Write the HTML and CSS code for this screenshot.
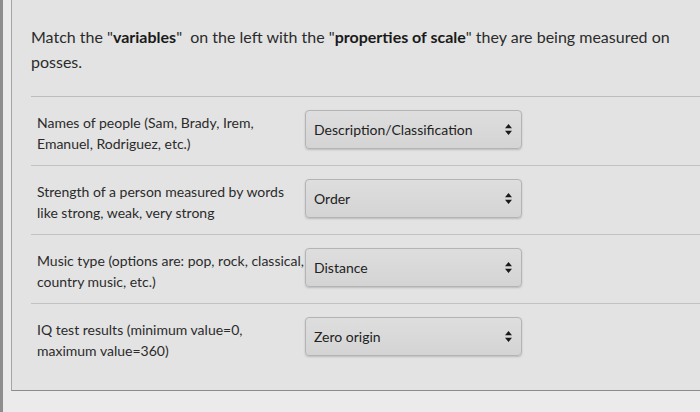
FILE: index.html
```html
<!DOCTYPE html>
<html lang="en">
<head>
    <meta charset="UTF-8">
    <meta name="viewport" content="width=device-width, initial-scale=1.0">
    <title>Matching question</title>
    <link rel="stylesheet" href="styles.css">
</head>
<body>

<div class="question">
    <p class="question-text">Match the "<b>variables</b>"&nbsp; on the left with the "<b>properties of scale</b>" they are being measured on posses.</p>

    <!-- Пары для сопоставления -->
    <div class="answers">
        <div class="row">
            <div class="label">Names of people (Sam, Brady, Irem, Emanuel, Rodriguez, etc.)</div>
            <div class="select">
                <span>Description/Classification</span>
                <svg class="arrows" width="7" height="11" viewBox="0 0 7 11"><path d="M3.5 0L7 4.2H0Z M3.5 11L0 6.8H7Z" fill="#1a1a1a"/></svg>
            </div>
        </div>
        <div class="row">
            <div class="label">Strength of a person measured by words like strong, weak, very strong</div>
            <div class="select">
                <span>Order</span>
                <svg class="arrows" width="7" height="11" viewBox="0 0 7 11"><path d="M3.5 0L7 4.2H0Z M3.5 11L0 6.8H7Z" fill="#1a1a1a"/></svg>
            </div>
        </div>
        <div class="row">
            <div class="label">Music type (options are: pop, rock, classical, country music, etc.)</div>
            <div class="select">
                <span>Distance</span>
                <svg class="arrows" width="7" height="11" viewBox="0 0 7 11"><path d="M3.5 0L7 4.2H0Z M3.5 11L0 6.8H7Z" fill="#1a1a1a"/></svg>
            </div>
        </div>
        <div class="row last">
            <div class="label">IQ test results (minimum value=0, maximum value=360)</div>
            <div class="select">
                <span>Zero origin</span>
                <svg class="arrows" width="7" height="11" viewBox="0 0 7 11"><path d="M3.5 0L7 4.2H0Z M3.5 11L0 6.8H7Z" fill="#1a1a1a"/></svg>
            </div>
        </div>
    </div>
</div>

</body>
</html>
```

FILE: styles.css
```css
/* Общий фон */
body {
    margin: 0;
    height: 412px;
    box-sizing: border-box;
    background-color: #ebebeb;
    border-left: 3px solid #8e8e8e;
    font-family: Lato, "Open Sans", sans-serif;
    color: #2b2b2b;
    overflow: hidden;
}
.question {
    margin-left: 8px;
    height: 391px;
    box-sizing: border-box;
    background-color: #e3e3e3;
    border-left: 1px solid #a5a5a5;
    border-bottom: 1px solid #8c8c8c;
    padding-left: 19px;
}
.question-text {
    margin: 0 0 22px;
    padding-top: 24px;
    font-size: 16px;
    line-height: 25px;
    color: #2b2b2b;
}
.question-text b {
    color: #1a1a1a;
}
.answers {
    border-top: 1px solid #bdbdbd;
}
.row {
    display: flex;
    align-items: flex-start;
    padding: 13px 0 11px 6px;
    border-bottom: 1px solid #c2c2c2;
}
.row.last {
    border-bottom: none;
}
.label {
    width: 268px;
    font-size: 14px;
    line-height: 21px;
    padding-top: 2px;
}
.select {
    width: 217px;
    height: 39px;
    box-sizing: border-box;
    display: flex;
    align-items: center;
    justify-content: space-between;
    padding: 0 9px 0 8px;
    border: 1px solid #b4b4b4;
    border-radius: 4px;
    background: linear-gradient(#dedede, #d4d4d4);
    box-shadow: 0 1px 2px rgba(0,0,0,0.18);
    font-size: 14px;
    color: #222;
}
.arrows {
    display: block;
}
```
